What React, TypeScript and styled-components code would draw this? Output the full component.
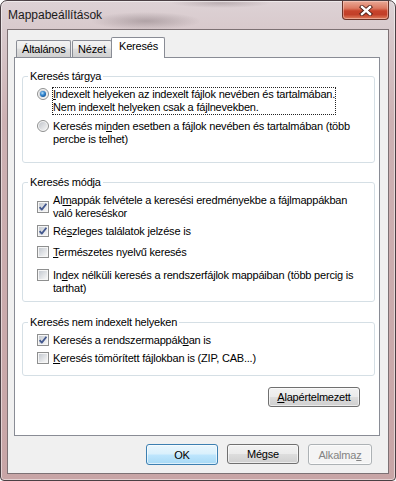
import { useId } from "react";
import styled, { createGlobalStyle } from "styled-components";

const GlobalStyle = createGlobalStyle`
  html, body {
    margin: 0;
    padding: 0;
    background: #ffffff;
  }
  body {
    font-family: "Liberation Sans", Arial, sans-serif;
    font-size: 11px;
    letter-spacing: -0.2px;
    color: #000;
  }
`;

const Window = styled.div`
  width: 396px;
  height: 481px;
  box-sizing: border-box;
  display: flex;
  flex-direction: column;
  border: 1px solid #4b4044;
  border-radius: 7px 7px 4px 4px;
  background:
    radial-gradient(ellipse 55px 9px at 145px 20px, rgba(70, 55, 60, 0.28), transparent),
    radial-gradient(ellipse 50px 5px at 220px 2px, rgba(70, 55, 60, 0.22), transparent),
    linear-gradient(180deg, #ddd2d5 0px, #d8c9cc 30px, #cdb1b3 120px, #c8a5a6 100%);
  box-shadow: inset 0 0 0 1px rgba(255, 255, 255, 0.5);
  overflow: hidden;
`;

const TitleBar = styled.div`
  height: 29px;
  flex: none;
  display: flex;
  justify-content: space-between;
  align-items: flex-start;
`;

const Title = styled.div`
  padding: 7px 0 0 7px;
  font-size: 12px;
  line-height: 14px;
  letter-spacing: 0;
  color: #1a1a1a;
`;

const CloseButton = styled.div`
  width: 47px;
  height: 19px;
  margin-right: 6px;
  box-sizing: border-box;
  display: flex;
  align-items: center;
  justify-content: center;
  border: 1px solid #6a3328;
  border-top: none;
  border-radius: 0 0 4px 4px;
  background: linear-gradient(
    180deg,
    #e9a996 0%,
    #dc7a62 40%,
    #c7432b 55%,
    #c23f28 75%,
    #e0805f 100%
  );
  box-shadow: inset 0 0 0 1px rgba(255, 220, 210, 0.45);
`;

const Client = styled.div`
  flex: 1;
  margin: 0 7px 7px 7px;
  padding: 7px 0 0 6px;
  background: #f0f0f0;
  box-shadow: 0 0 0 1px #7d7174;
  display: flex;
  flex-direction: column;
`;

const TabStrip = styled.div`
  height: 20px;
  margin-left: 2px;
  display: flex;
  align-items: flex-start;
  position: relative;
  z-index: 1;
`;

const Tab = styled.div<{ $w: number; $active?: boolean }>`
  width: ${(p) => p.$w}px;
  box-sizing: border-box;
  height: ${(p) => (p.$active ? 21 : 17)}px;
  margin-top: ${(p) => (p.$active ? 0 : 3)}px;
  margin-left: ${(p) => (p.$active ? -1 : 1)}px;
  margin-right: ${(p) => (p.$active ? -2 : 0)}px;
  padding: 1px 0 0 ${(p) => (p.$active ? 7 : 5)}px;
  line-height: 14px;
  border: 1px solid #898c95;
  border-bottom: none;
  border-radius: 2px 2px 0 0;
  background: ${(p) =>
    p.$active
      ? "#ffffff"
      : "linear-gradient(180deg, #f3f3f3 0%, #ebebeb 45%, #dedede 50%, #d0d0d0 100%)"};
  white-space: nowrap;

  &:first-child {
    margin-left: 0;
  }
`;

const Panel = styled.div`
  width: 366px;
  height: 379px;
  box-sizing: border-box;
  border: 1px solid #898c95;
  background: #ffffff;
  padding: 12px 4px 0 7px;
  display: flex;
  flex-direction: column;
`;

const Group = styled.fieldset<{ $gap?: number }>`
  margin: ${(p) => p.$gap ?? 0}px 0 0 0;
  padding: 0;
  min-width: 0;
  border: 1px solid #d5dfe5;
  border-radius: 3px;
`;

const Legend = styled.legend`
  margin-left: 5px;
  padding: 0 2px;
  line-height: 13px;
`;

const GroupBody = styled.div<{ $bottom: number }>`
  padding: 5px 0 ${(p) => p.$bottom}px 14px;
  display: flex;
  flex-direction: column;
`;

const Row = styled.div<{ $gap?: number; $center?: boolean }>`
  display: flex;
  align-items: ${(p) => (p.$center ? "center" : "flex-start")};
  margin-top: ${(p) => p.$gap ?? 0}px;
`;

const Glyph = styled.svg`
  flex: none;
  margin-right: 4px;
  display: block;
`;

const Label = styled.div<{ $focus?: boolean }>`
  line-height: 13px;
  width: fit-content;
  outline: ${(p) => (p.$focus ? "1px dotted #222" : "none")};
  outline-offset: 0;
`;

const ResetRow = styled.div`
  margin-top: 11px;
  padding-right: 15px;
  display: flex;
  justify-content: flex-end;
`;

const Footer = styled.div`
  margin-top: 8px;
  padding-right: 16px;
  display: flex;
  justify-content: flex-end;
  gap: 9px;
`;

const Button = styled.div<{ $w: number; $kind?: "default" | "disabled" }>`
  width: ${(p) => p.$w}px;
  height: ${(p) => (p.$kind ? 21 : 20)}px;
  box-sizing: border-box;
  display: flex;
  align-items: center;
  justify-content: center;
  border-radius: 3px;
  border: 1px solid
    ${(p) =>
      p.$kind === "default" ? "#3c7fb1" : p.$kind === "disabled" ? "#adb2b5" : "#707070"};
  color: ${(p) => (p.$kind === "disabled" ? "#838383" : "#000")};
  background: ${(p) =>
    p.$kind === "default"
      ? "linear-gradient(180deg, #eaf6fd 0%, #d9f0fc 48%, #bee6fd 52%, #a7d9f5 100%)"
      : p.$kind === "disabled"
      ? "#f4f4f4"
      : "linear-gradient(180deg, #f2f2f2 0%, #ebebeb 48%, #dddddd 52%, #cfcfcf 100%)"};
  box-shadow: inset 0 0 0 1px rgba(255, 255, 255, 0.6);
`;

const Check = ({ on }: { on?: boolean }) => {
  const id = useId();
  return (
    <Glyph width="12" height="12" viewBox="0 0 12 12">
      <defs>
        <linearGradient id={id} x1="0" y1="0" x2="1" y2="1">
          <stop offset="0" stopColor="#c5cad1" />
          <stop offset="1" stopColor="#f7f7f7" />
        </linearGradient>
      </defs>
      <rect x="0.5" y="0.5" width="11" height="11" fill="#f6f6f6" stroke="#8e8f8f" />
      <rect x="2" y="2" width="8" height="8" fill={`url(#${id})`} />
      {on && (
        <path
          d="M2.6 6.2 L4.8 8.6 L9.4 2.8"
          stroke="#44598f"
          strokeWidth="1.8"
          fill="none"
          strokeLinejoin="round"
        />
      )}
    </Glyph>
  );
};

const Radio = ({ on }: { on?: boolean }) => {
  const id = useId();
  return (
    <Glyph width="12" height="12" viewBox="0 0 12 12">
      <defs>
        <linearGradient id={`${id}a`} x1="0" y1="0" x2="1" y2="1">
          <stop offset="0" stopColor="#c2c6cc" />
          <stop offset="1" stopColor="#f4f4f4" />
        </linearGradient>
        <radialGradient id={`${id}b`} cx="0.4" cy="0.35" r="0.7">
          <stop offset="0" stopColor="#bfe0f8" />
          <stop offset="0.45" stopColor="#3b8fd6" />
          <stop offset="1" stopColor="#0d4f95" />
        </radialGradient>
      </defs>
      <circle cx="6" cy="6" r="5.5" fill="#f5f5f5" stroke="#8e8f8f" />
      <circle cx="6" cy="6" r="4" fill={`url(#${id}a)`} />
      {on && <circle cx="6" cy="6" r="3" fill={`url(#${id}b)`} />}
    </Glyph>
  );
};

const CloseGlyph = () => (
  <svg width="14" height="11" viewBox="0 0 14 11">
    <path d="M3 2 L11 9 M11 2 L3 9" stroke="#4a1d14" strokeWidth="4.2" strokeLinecap="square" />
    <path d="M3 2 L11 9 M11 2 L3 9" stroke="#ffffff" strokeWidth="2.4" strokeLinecap="square" />
  </svg>
);

export default function App() {
  return (
    <>
      <GlobalStyle />
      <Window>
        <TitleBar>
          <Title>Mappabeállítások</Title>
          <CloseButton>
            <CloseGlyph />
          </CloseButton>
        </TitleBar>
        <Client>
          <TabStrip>
            <Tab $w={55}>Általános</Tab>
            <Tab $w={40}>Nézet</Tab>
            <Tab $w={54} $active>
              Keresés
            </Tab>
          </TabStrip>
          <Panel>
            <Group>
              <Legend>Keresés tárgya</Legend>
              <GroupBody $bottom={16}>
                <Row>
                  <Radio on />
                  <Label $focus>
                    <u>I</u>ndexelt helyeken az indexelt fájlok nevében és tartalmában.
                    <br />
                    Nem indexelt helyeken csak a fájlnevekben.
                  </Label>
                </Row>
                <Row $gap={6}>
                  <Radio />
                  <Label>
                    Keresés mi<u>n</u>den esetben a fájlok nevében és tartalmában (több
                    <br />
                    percbe is telhet)
                  </Label>
                </Row>
              </GroupBody>
            </Group>

            <Group $gap={13}>
              <Legend>Keresés módja</Legend>
              <GroupBody $bottom={6}>
                <Row $center>
                  <Check on />
                  <Label>
                    Al<u>m</u>appák felvétele a keresési eredményekbe a fájlmappákban
                    <br />
                    való kereséskor
                  </Label>
                </Row>
                <Row $gap={5}>
                  <Check on />
                  <Label>
                    Ré<u>s</u>zleges találatok jelzése is
                  </Label>
                </Row>
                <Row $gap={8}>
                  <Check />
                  <Label>
                    <u>T</u>ermészetes nyelvű keresés
                  </Label>
                </Row>
                <Row $gap={10}>
                  <Check />
                  <Label>
                    In<u>d</u>ex nélküli keresés a rendszerfájlok mappáiban (több percig is
                    <br />
                    tarthat)
                  </Label>
                </Row>
              </GroupBody>
            </Group>

            <Group $gap={14}>
              <Legend>Keresés nem indexelt helyeken</Legend>
              <GroupBody $bottom={10}>
                <Row>
                  <Check on />
                  <Label>
                    Keresés a rendszermappák<u>b</u>an is
                  </Label>
                </Row>
                <Row $gap={5}>
                  <Check />
                  <Label>
                    <u>K</u>eresés tömörített fájlokban is (ZIP, CAB...)
                  </Label>
                </Row>
              </GroupBody>
            </Group>

            <ResetRow>
              <Button $w={92}>
                <span>
                  <u>A</u>lapértelmezett
                </span>
              </Button>
            </ResetRow>
          </Panel>
          <Footer>
            <Button $w={72} $kind="default">
              OK
            </Button>
            <Button $w={72}>Mégse</Button>
            <Button $w={64} $kind="disabled">
              <span>
                Alkalma<u>z</u>
              </span>
            </Button>
          </Footer>
        </Client>
      </Window>
    </>
  );
}
